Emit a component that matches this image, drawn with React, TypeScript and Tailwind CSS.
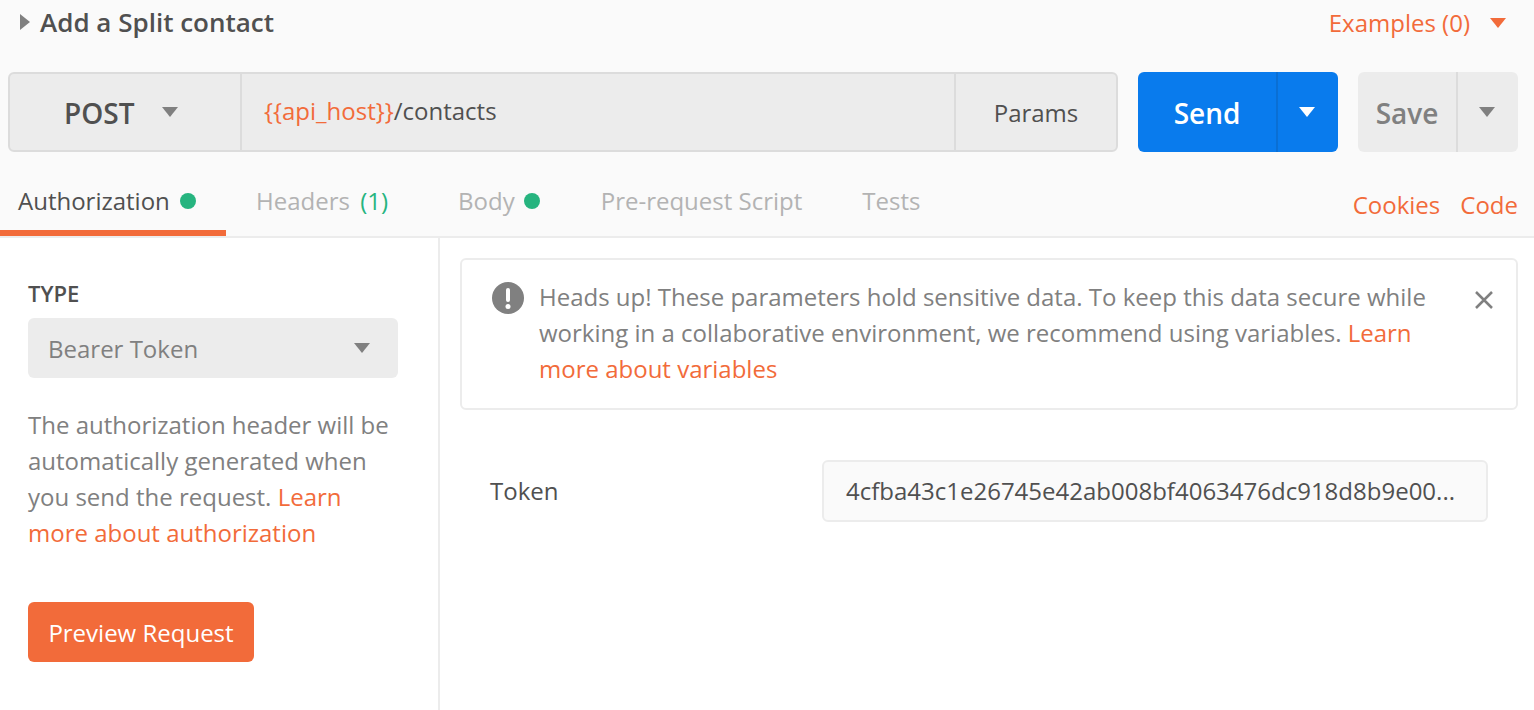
import React from 'react';

const ORANGE = 'text-[#f26b3a]';

// small filled caret used on the dropdowns
const Caret = ({ className }: { className: string }) => (
  <svg width="16" height="10" viewBox="0 0 16 10" className={className}>
    <path d="M0 0h16L8 10z" fill="currentColor" />
  </svg>
);

const Dot = () => <span className="inline-block w-[16px] h-[16px] rounded-full bg-[#26b47f]" />;

const App: React.FC = () => {
  return (
    <div className="w-[1534px] h-[710px] overflow-hidden bg-white text-[24px] text-[#808080] font-['Open_Sans',sans-serif]">
      <div className="h-[238px] bg-[#fafafa] border-b-2 border-[#ececec] flex flex-col">
        {/* title row */}
        <div className="h-[72px] flex items-start justify-between pt-[5px] pr-[28px]">
          <div className="flex items-center h-[36px] pl-[20px] -mt-[1px]">
            <svg width="10" height="16" viewBox="0 0 10 16" className="text-[#808080]">
              <path d="M0 0l10 8-10 8z" fill="currentColor" />
            </svg>
            <span className="ml-[10px] text-[26px] font-semibold text-[#505050]">Add a Split contact</span>
          </div>
          <div className={`flex items-center h-[36px] ${ORANGE}`}>
            <span>Examples (0)</span>
            <Caret className="ml-[20px]" />
          </div>
        </div>

        {/* url bar */}
        <div className="h-[80px] flex pl-[8px] pr-[16px]">
          <div className="w-[1110px] flex border-2 border-[#dcdcdc] rounded-[6px] bg-[#ececec]">
            <div className="w-[232px] flex items-center pl-[54px] border-r-2 border-[#dcdcdc]">
              <span className="text-[28px] pt-[2px] font-semibold text-[#505050]">POST</span>
              <Caret className="ml-[28px] text-[#808080]" />
            </div>
            <div className="flex-1 flex items-center pl-[22px] pb-[2px] text-[#505050]">
              <span className={ORANGE}>{'{{api_host}}'}</span>
              <span>/contacts</span>
            </div>
            <div className="w-[162px] flex items-center justify-center pt-[2px] border-l-2 border-[#dcdcdc] text-[#505050]">
              Params
            </div>
          </div>
          <div className="ml-[20px] w-[200px] flex rounded-[6px] bg-[#097bed] text-white">
            <div className="w-[138px] flex items-center justify-center pt-[2px] text-[28px] font-semibold">Send</div>
            <div className="flex-1 flex items-center justify-center pr-[3px] border-l-2 border-[#0a6fd4]">
              <Caret className="" />
            </div>
          </div>
          <div className="ml-[20px] w-[160px] flex rounded-[6px] bg-[#ececec] text-[#808080]">
            <div className="w-[98px] flex items-center justify-center pt-[2px] text-[28px] font-semibold">Save</div>
            <div className="flex-1 flex items-center justify-center pr-[3px] border-l-2 border-[#dcdcdc]">
              <Caret className="" />
            </div>
          </div>
        </div>

        {/* tabs */}
        <div className="flex-1 flex justify-between items-end pr-[16px]">
          <div className="flex h-[78px] items-stretch">
            <div className="w-[226px] pl-[18px] pt-[25px] border-b-[6px] border-[#f26b3a] text-[#505050] flex items-start">
              <span className="leading-[36px]">Authorization</span>
              <span className="ml-[10px] mt-[10px] flex"><Dot /></span>
            </div>
            <div className="ml-[30px] pt-[25px] text-[#b3b3b3] leading-[36px]">
              Headers <span className="ml-[4px] text-[#26b47f]">(1)</span>
            </div>
            <div className="ml-[70px] pt-[25px] text-[#b3b3b3] flex items-start">
              <span className="leading-[36px]">Body</span>
              <span className="ml-[9px] mt-[10px] flex"><Dot /></span>
            </div>
            <div className="ml-[61px] pt-[25px] text-[#b3b3b3] leading-[36px]">Pre-request Script</div>
            <div className="ml-[60px] pt-[25px] text-[#b3b3b3] leading-[36px]">Tests</div>
          </div>
          <div className={`flex gap-[20px] h-[78px] pt-[29px] leading-[36px] ${ORANGE}`}>
            <span>Cookies</span>
            <span>Code</span>
          </div>
        </div>
      </div>

      <div className="flex h-[472px]">
        {/* left pane */}
        <div className="w-[440px] shrink-0 border-r-2 border-[#ececec] pl-[28px] pr-[40px] pt-[37px] leading-[36px]">
          <div className="text-[22px] leading-[36px] font-semibold text-[#505050]">TYPE</div>
          <div className="mt-[7px] h-[60px] w-[370px] rounded-[6px] bg-[#ececec] flex items-center justify-between pl-[20px] pr-[28px]">
            <span className="pt-[2px]">Bearer Token</span>
            <Caret className="" />
          </div>
          <p className="mt-[29px] w-[370px]">
            The authorization header will be automatically generated when you send the request.{' '}
            <span className={ORANGE}>Learn more about authorization</span>
          </p>
          <button className="mt-[51px] h-[60px] w-[226px] pt-[2px] rounded-[6px] bg-[#f26b3a] text-white text-center">
            Preview Request
          </button>
        </div>

        {/* right pane */}
        <div className="flex-1 min-w-0 pt-[20px] pl-[20px] pr-[16px] leading-[36px]">
          <div className="relative h-[152px] border-2 border-[#ececec] rounded-[6px] pl-[30px] pr-[60px] pt-[19px] flex">
            <svg width="32" height="32" viewBox="0 0 32 32" className="shrink-0 mt-[3px]">
              <circle cx="16" cy="16" r="16" fill="#808080" />
              <rect x="14" y="6" width="4" height="14" rx="2" fill="#fff" />
              <circle cx="16" cy="24.5" r="2.5" fill="#fff" />
            </svg>
            <p className="ml-[15px] flex-1 min-w-0">
              Heads up! These parameters hold sensitive data. To keep this data secure while working in a collaborative environment, we recommend using variables.{' '}
              <span className={ORANGE}>Learn more about variables</span>
            </p>
            <svg width="20" height="20" viewBox="0 0 20 20" className="absolute right-[22px] top-[30px]">
              <path d="M2 2l16 16M18 2L2 18" stroke="#808080" strokeWidth="2.5" />
            </svg>
          </div>
          <div className="mt-[50px] flex items-center h-[62px] pl-[30px]">
            <span className="w-[332px] text-[#505050]">Token</span>
            <div className="w-[666px] h-[62px] border-2 border-[#ececec] rounded-[6px] bg-[#fafafa] pl-[22px] flex items-center text-[#505050] whitespace-nowrap">
              <span>4cfba43c1e26745e42ab008bf4063476dc918d8b9e00...</span>
            </div>
          </div>
        </div>
      </div>
    </div>
  );
};

export default App;
